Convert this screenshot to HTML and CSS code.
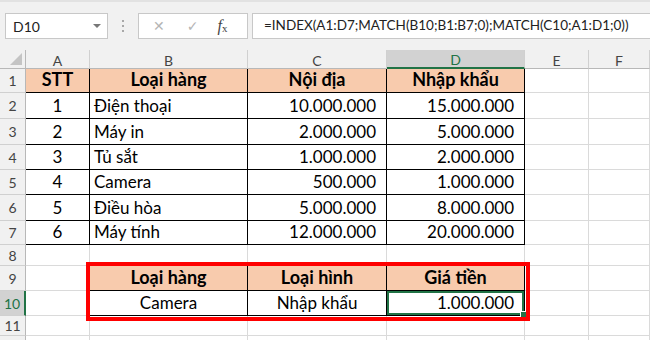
FILE: index.html
```html
<!DOCTYPE html>
<html lang="vi">
<head>
    <meta charset="UTF-8">
    <title>INDEX MATCH</title>
    <link rel="stylesheet" href="styles.css">
</head>
<body>
    <div class="app">
        <!-- Formula toolbar -->
        <div class="toolbar">
            <div class="name-box">
                <span>D10</span>
                <span class="caret"></span>
            </div>
            <div class="grip"><i></i><i></i><i></i></div>
            <div class="fx-box">
                <span class="fx-btn">&#x2715;</span>
                <span class="fx-btn">&#x2713;</span>
                <span class="fx-btn fx"><em>f</em><sub>x</sub></span>
            </div>
            <div class="formula">=INDEX(A1:D7;MATCH(B10;B1:B7;0);MATCH(C10;A1:D1;0))</div>
        </div>

        <!-- Sheet grid -->
        <div class="sheet">
            <div class="hd corner"><span class="tri"></span></div>
            <div class="hd col">A</div>
            <div class="hd col">B</div>
            <div class="hd col">C</div>
            <div class="hd col active-col">D</div>
            <div class="hd col">E</div>
            <div class="hd col">F</div>

            <div class="hd row">1</div>
            <div class="c t th">STT</div>
            <div class="c t th">Loại hàng</div>
            <div class="c t th">Nội địa</div>
            <div class="c t th">Nhập khẩu</div>
            <div class="c"></div>
            <div class="c"></div>

            <div class="hd row">2</div>
            <div class="c t mid">1</div>
            <div class="c t">Điện thoại</div>
            <div class="c t num">10.000.000</div>
            <div class="c t num">15.000.000</div>
            <div class="c"></div>
            <div class="c"></div>

            <div class="hd row">3</div>
            <div class="c t mid">2</div>
            <div class="c t">Máy in</div>
            <div class="c t num">2.000.000</div>
            <div class="c t num">5.000.000</div>
            <div class="c"></div>
            <div class="c"></div>

            <div class="hd row">4</div>
            <div class="c t mid">3</div>
            <div class="c t">Tủ sắt</div>
            <div class="c t num">1.000.000</div>
            <div class="c t num">2.000.000</div>
            <div class="c"></div>
            <div class="c"></div>

            <div class="hd row">5</div>
            <div class="c t mid">4</div>
            <div class="c t">Camera</div>
            <div class="c t num">500.000</div>
            <div class="c t num">1.000.000</div>
            <div class="c"></div>
            <div class="c"></div>

            <div class="hd row">6</div>
            <div class="c t mid">5</div>
            <div class="c t">Điều hòa</div>
            <div class="c t num">5.000.000</div>
            <div class="c t num">8.000.000</div>
            <div class="c"></div>
            <div class="c"></div>

            <div class="hd row">7</div>
            <div class="c t mid">6</div>
            <div class="c t">Máy tính</div>
            <div class="c t num">12.000.000</div>
            <div class="c t num">20.000.000</div>
            <div class="c"></div>
            <div class="c"></div>

            <div class="hd row">8</div>
            <div class="c"></div>
            <div class="c ab"></div>
            <div class="c ab"></div>
            <div class="c ab"></div>
            <div class="c"></div>
            <div class="c"></div>

            <div class="hd row">9</div>
            <div class="c lb"></div>
            <div class="c t th">Loại hàng</div>
            <div class="c t th">Loại hình</div>
            <div class="c t th">Giá tiền</div>
            <div class="c"></div>
            <div class="c"></div>

            <div class="hd row active-row">10</div>
            <div class="c lb"></div>
            <div class="c t mid">Camera</div>
            <div class="c t mid">Nhập khẩu</div>
            <div class="c t num active-cell">1.000.000</div>
            <div class="c"></div>
            <div class="c"></div>

            <div class="hd row">11</div>
            <div class="c"></div>
            <div class="c"></div>
            <div class="c"></div>
            <div class="c"></div>
            <div class="c"></div>
            <div class="c"></div>

            <div class="hd row"></div>
            <div class="c"></div>
            <div class="c"></div>
            <div class="c"></div>
            <div class="c"></div>
            <div class="c"></div>
            <div class="c"></div>

            <!-- red highlight round the lookup result -->
            <div class="mark"></div>
        </div>
    </div>
</body>
</html>
```

FILE: styles.css
```css
body {
    margin: 0;
    font-family: Lato, "Open Sans", sans-serif;
    background-color: #fff;
    overflow: hidden;
}
.app {
    width: 650px;
    height: 340px;
    overflow: hidden;
}

/* toolbar */
.toolbar {
    display: flex;
    align-items: center;
    height: 50px;
    box-sizing: border-box;
    padding: 0 0 0 5px;
    background-color: #f1f1f1;
    border-top: 2px solid #e2e2e2;
}
.name-box {
    flex-shrink: 0;
    display: flex;
    align-items: center;
    justify-content: space-between;
    width: 103px;
    height: 26px;
    box-sizing: border-box;
    padding: 0 6px 0 7px;
    background-color: #fff;
    border: 1px solid #c8c8c8;
    font-size: 14px;
    color: #222;
}
.caret {
    width: 0;
    height: 0;
    border-left: 4px solid transparent;
    border-right: 4px solid transparent;
    border-top: 4px solid #777;
}
.grip {
    flex-shrink: 0;
    display: flex;
    flex-direction: column;
    gap: 3px;
    margin: 0 14px 0 14px;
}
.grip i {
    width: 2px;
    height: 2px;
    background-color: #a8a8a8;
}
.fx-box {
    flex-shrink: 0;
    display: flex;
    align-items: center;
    width: 110px;
    height: 26px;
    box-sizing: border-box;
    padding: 0 0 0 14px;
    background-color: #fff;
    border: 1px solid #c8c8c8;
    gap: 22px;
}
.fx-btn {
    font-size: 14px;
    color: #b5b5b5;
    font-family: "DejaVu Sans", sans-serif;
}
.fx {
    font-family: "Liberation Serif", serif;
    color: #444;
    font-size: 16px;
    margin-left: -3px;
}
.fx sub {
    font-size: 11px;
    vertical-align: -1px;
}
.formula {
    flex: 1;
    min-width: 0;
    overflow: hidden;
    height: 26px;
    margin-left: 4px;
    box-sizing: border-box;
    padding: 3px 0 0 11px;
    background-color: #fff;
    border: 1px solid #c8c8c8;
    border-right: none;
    font-size: 13.5px;
    color: #222;
    white-space: nowrap;
}

/* sheet */
.sheet {
    position: relative;
    display: grid;
    grid-template-columns: 26px 64px 158px 139px 138px 64px 61px;
    grid-template-rows: 19px 24px 26px 26px 25px 25px 26px 24px 21px 25px 25px 20px 20px;
    font-size: 17px;
    color: #000;
}
.hd {
    display: flex;
    align-items: center;
    justify-content: center;
    background-color: #f1f1f1;
    color: #444;
    font-size: 14px;
    border-right: 1px solid #d0d0d0;
    border-bottom: 1px solid #d0d0d0;
}
.col {
    border-bottom-color: #b8b8b8;
    padding-top: 2px;
}
.row {
    border-right-color: #b8b8b8;
}
.corner {
    position: relative;
    border-bottom-color: #b8b8b8;
    border-right-color: #b8b8b8;
}
.tri {
    position: absolute;
    right: 3px;
    bottom: 3px;
    width: 0;
    height: 0;
    border-left: 12px solid transparent;
    border-bottom: 12px solid #c4c4c4;
}
.active-col {
    background-color: #d2d2d2;
    color: #217346;
    border-bottom: 2px solid #217346;
}
.active-row {
    background-color: #d2d2d2;
    color: #217346;
    border-right: 2px solid #217346;
}
.c {
    display: flex;
    align-items: flex-end;
    padding: 0 4px 2px;
    white-space: nowrap;
    border-right: 1px solid #dadada;
    border-bottom: 1px solid #dadada;
    min-width: 0;
}
.t {
    border-right-color: #000;
    border-bottom-color: #000;
}
.lb {
    border-right-color: #000;
}
.ab {
    border-bottom-color: #000;
}
.th {
    justify-content: center;
    background-color: #f8cbad;
    font-weight: bold;
    font-size: 18px;
}
.mid {
    justify-content: center;
}
.num {
    justify-content: flex-end;
    padding-right: 10px;
}
.active-cell {
    position: relative;
    box-shadow: inset 0 0 0 2px #217346;
}
.active-cell::after {
    content: "";
    position: absolute;
    right: -3px;
    bottom: -3px;
    width: 5px;
    height: 5px;
    background-color: #217346;
    border: 1px solid #fff;
}
.mark {
    position: absolute;
    grid-column: 3 / 6;
    grid-row: 10 / 12;
    top: -4px;
    left: -4px;
    right: -5px;
    bottom: -5px;
    border: 4px solid #ff0000;
    pointer-events: none;
}
```
